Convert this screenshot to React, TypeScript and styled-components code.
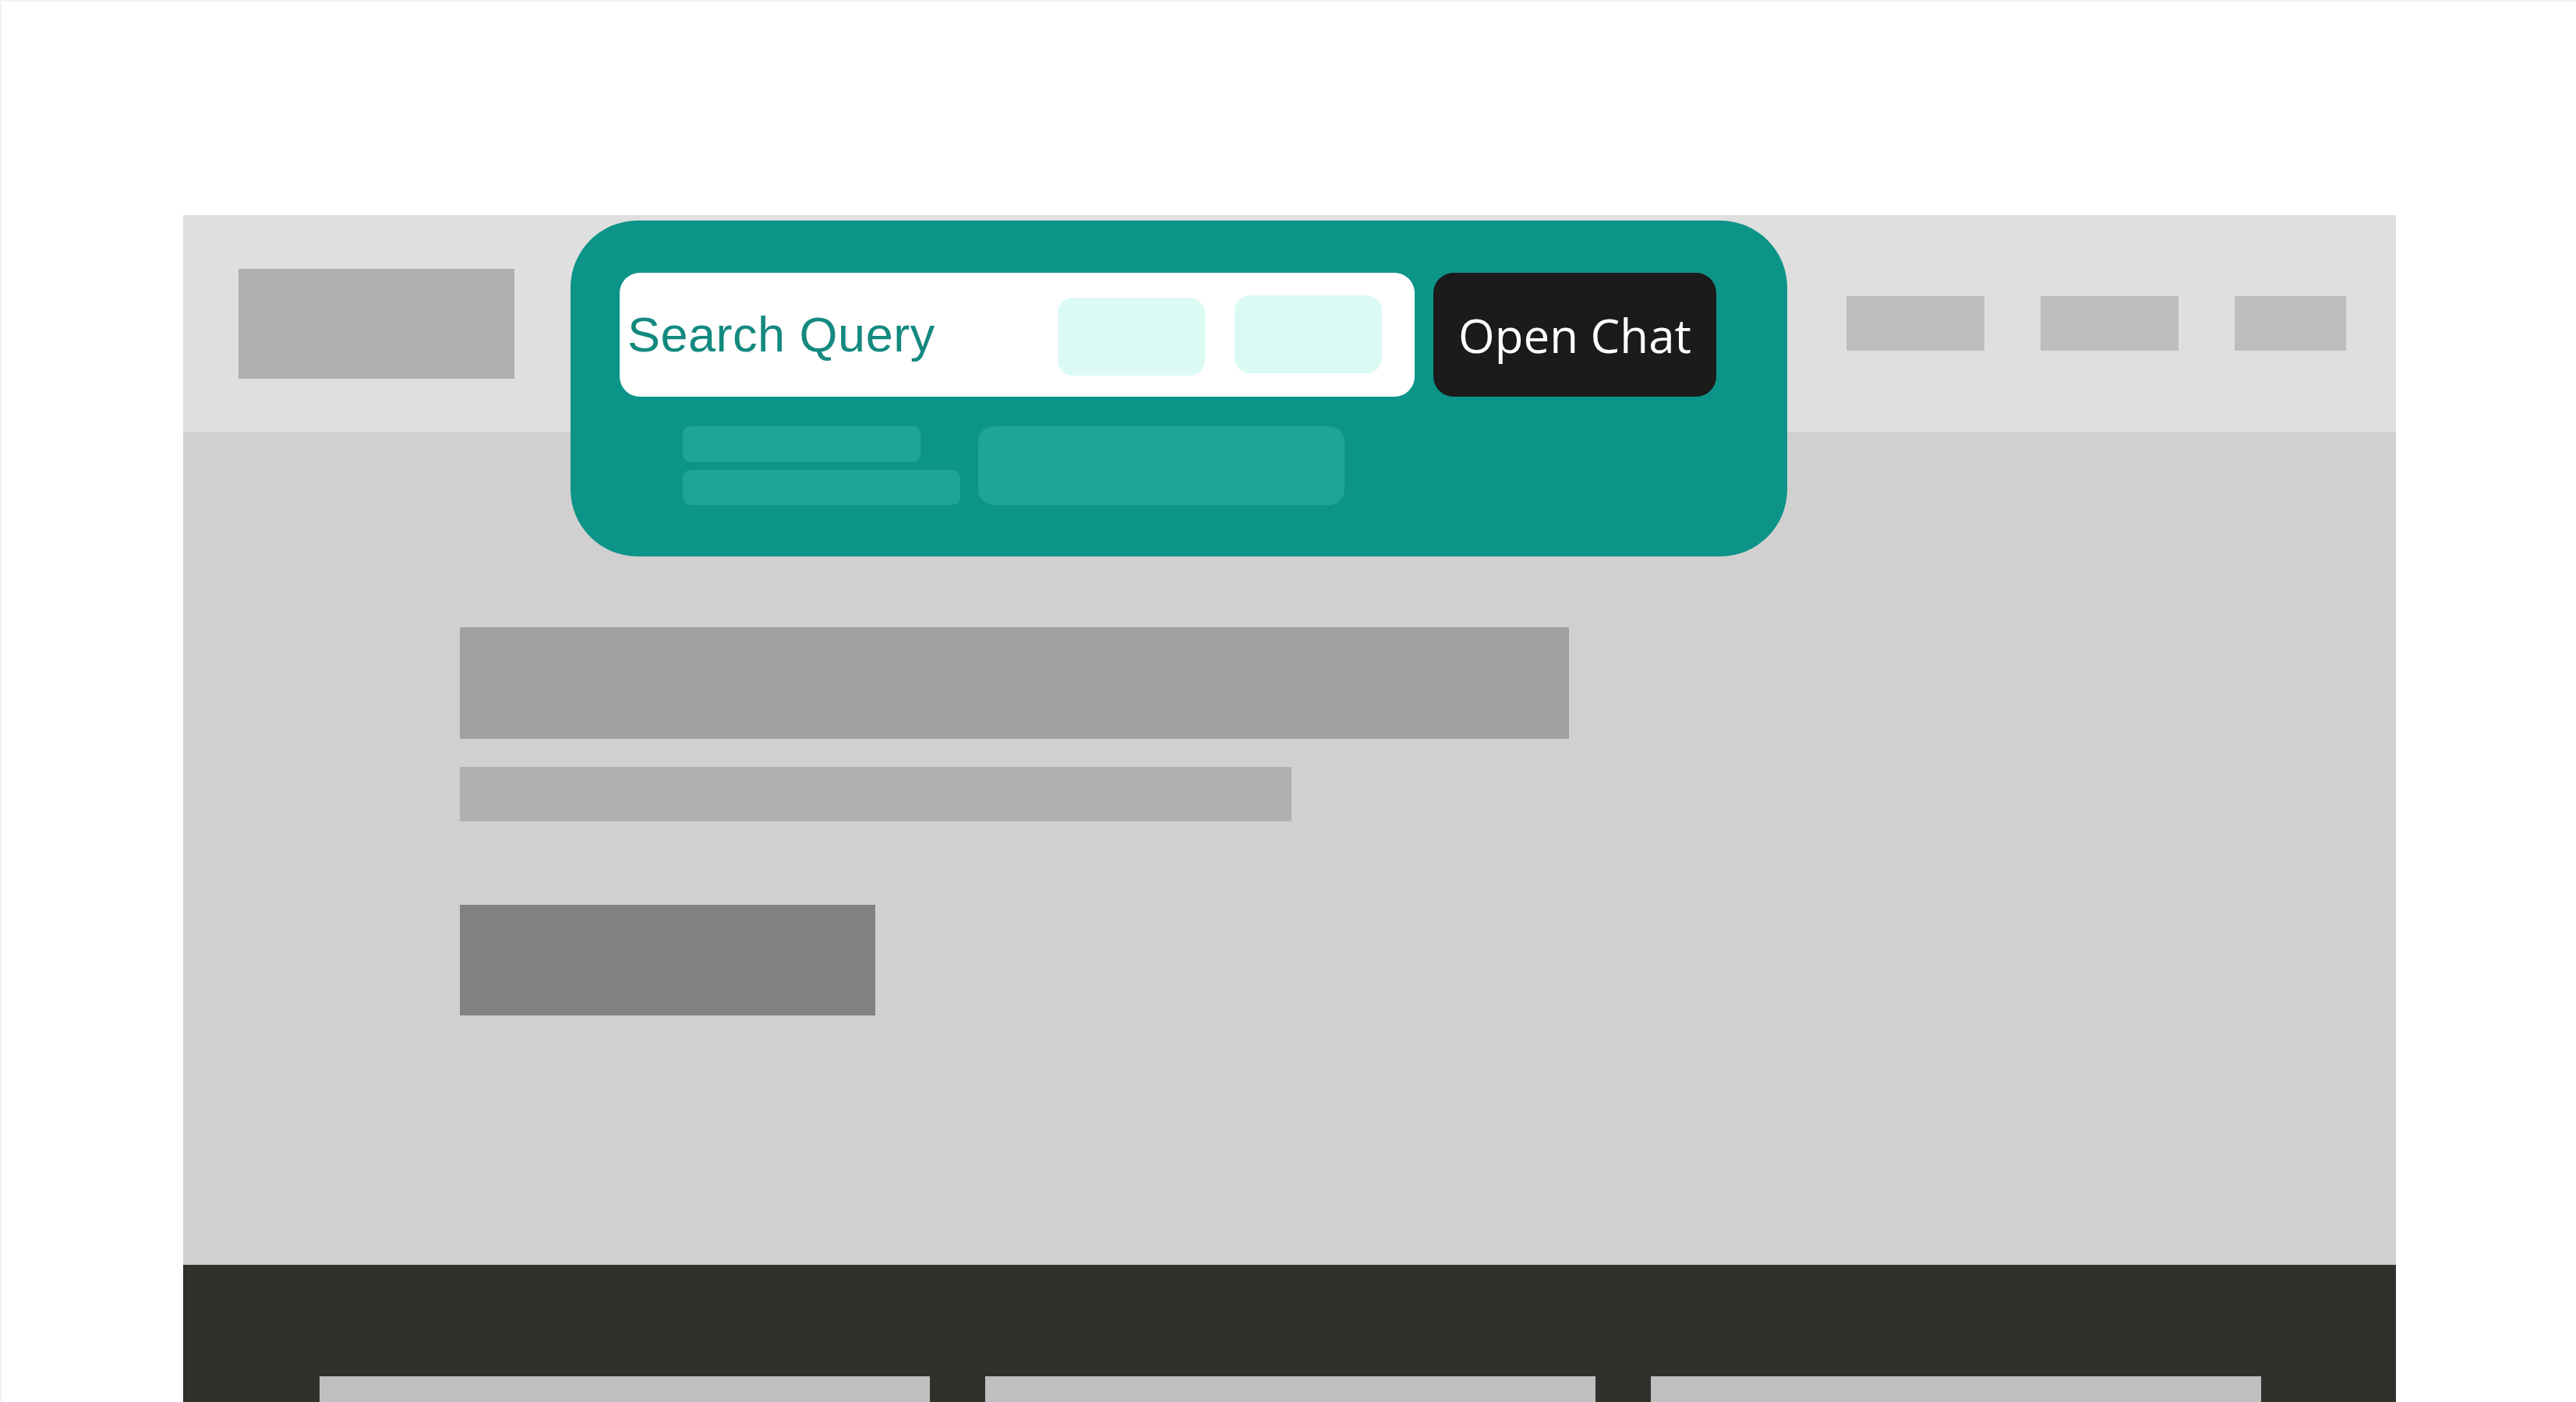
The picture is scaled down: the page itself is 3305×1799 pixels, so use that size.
import styled, { createGlobalStyle } from 'styled-components'

const GlobalStyle = createGlobalStyle`
  html, body {
    margin: 0;
    padding: 0;
    background: #ffffff;
  }
  body {
    border-top: 2px solid #f2f2f2;
    border-left: 2px solid #f2f2f2;
    overflow: hidden;
    font-family: 'Liberation Sans', Arial, sans-serif;
  }
`

const Page = styled.div`
  width: 3303px;
  height: 1797px;
  padding: 274px 0 0 233px;
  box-sizing: border-box;
  overflow: hidden;
`

const Frame = styled.div`
  position: relative;
  width: 2839px;
  display: flex;
  flex-direction: column;
`

const Header = styled.header`
  height: 278px;
  background: #dfdfdf;
  display: flex;
  align-items: center;
  justify-content: space-between;
  padding: 0 64px 0 71px;
`

const Logo = styled.div`
  width: 354px;
  height: 141px;
  background: #b0b0b0;
`

const Nav = styled.nav`
  display: flex;
  gap: 72px;
`

const NavItem = styled.div<{ $w: number }>`
  width: ${p => p.$w}px;
  height: 70px;
  background: #bebebe;
`

const Hero = styled.section`
  height: 1069px;
  background: #d0d0d0;
  box-sizing: border-box;
  padding: 251px 0 0 355px;
  display: flex;
  flex-direction: column;
  align-items: flex-start;
`

const Block = styled.div<{ $w: number; $h: number; $c: string; $mb: number }>`
  width: ${p => p.$w}px;
  height: ${p => p.$h}px;
  background: ${p => p.$c};
  margin-bottom: ${p => p.$mb}px;
`

const Footer = styled.footer`
  height: 176px;
  background: #30302c;
  padding: 143px 173px 0 175px;
  display: grid;
  grid-template-columns: repeat(3, 1fr);
  gap: 71px;
  box-sizing: border-box;
  overflow: hidden;
`

const FooterCard = styled.div`
  height: 33px;
  background: #bfbfbf;
`

const Overlay = styled.div`
  position: absolute;
  top: 7px;
  left: 497px;
  width: 1561px;
  height: 431px;
  box-sizing: border-box;
  background: #0d9488;
  border-radius: 86px;
  padding: 67px 91px 0 63px;
  display: flex;
  flex-direction: column;
  gap: 38px;
`

const SearchRow = styled.div`
  display: flex;
  gap: 24px;
`

const SearchBox = styled.div`
  width: 1020px;
  height: 159px;
  background: #ffffff;
  border-radius: 26px;
  display: flex;
  align-items: center;
  padding: 0 42px 0 10px;
  box-sizing: border-box;
`

const Query = styled.span`
  flex: 1;
  font-family: 'Liberation Sans', Arial, sans-serif;
  font-size: 63px;
  letter-spacing: 0.5px;
  color: #13897f;
  line-height: 1;
`

const Chips = styled.div`
  display: flex;
  gap: 38px;
  align-items: center;
`

const Chip = styled.div<{ $shift: number }>`
  width: 189px;
  height: 100px;
  background: #dcfaf4;
  border-radius: 20px;
  transform: translateY(${p => p.$shift}px);
`

const ChatButton = styled.button`
  width: 363px;
  height: 159px;
  border: none;
  border-radius: 26px;
  background: #1b1b1b;
  color: #ffffff;
  font-family: 'Open Sans', 'Noto Sans', sans-serif;
  font-size: 60px;
  padding: 0;
  cursor: pointer;
`

const Suggestions = styled.div`
  display: flex;
  gap: 23px;
  padding-left: 81px;
`

const Stack = styled.div`
  display: flex;
  flex-direction: column;
  gap: 10px;
`

const Pill = styled.div<{ $w: number; $h: number; $r: number }>`
  width: ${p => p.$w}px;
  height: ${p => p.$h}px;
  border-radius: ${p => p.$r}px;
  background: #1ea597;
`

const App = () => {
  return (
    <>
      <GlobalStyle />
      <Page>
        <Frame>
          <Header>
            <Logo />
            <Nav>
              <NavItem $w={177} />
              <NavItem $w={177} />
              <NavItem $w={143} />
            </Nav>
          </Header>
          <Hero>
            <Block $w={1423} $h={143} $c="#a0a0a0" $mb={36} />
            <Block $w={1067} $h={70} $c="#b0b0b0" $mb={107} />
            <Block $w={533} $h={142} $c="#828282" $mb={0} />
          </Hero>
          <Footer>
            <FooterCard />
            <FooterCard />
            <FooterCard />
          </Footer>

          <Overlay>
            <SearchRow>
              <SearchBox>
                <Query>Search Query</Query>
                <Chips>
                  <Chip $shift={2} />
                  <Chip $shift={-1} />
                </Chips>
              </SearchBox>
              <ChatButton>Open Chat</ChatButton>
            </SearchRow>
            <Suggestions>
              <Stack>
                <Pill $w={305} $h={46} $r={10} />
                <Pill $w={356} $h={45} $r={10} />
              </Stack>
              <Pill $w={470} $h={101} $r={20} />
            </Suggestions>
          </Overlay>
        </Frame>
      </Page>
    </>
  )
}

export default App
